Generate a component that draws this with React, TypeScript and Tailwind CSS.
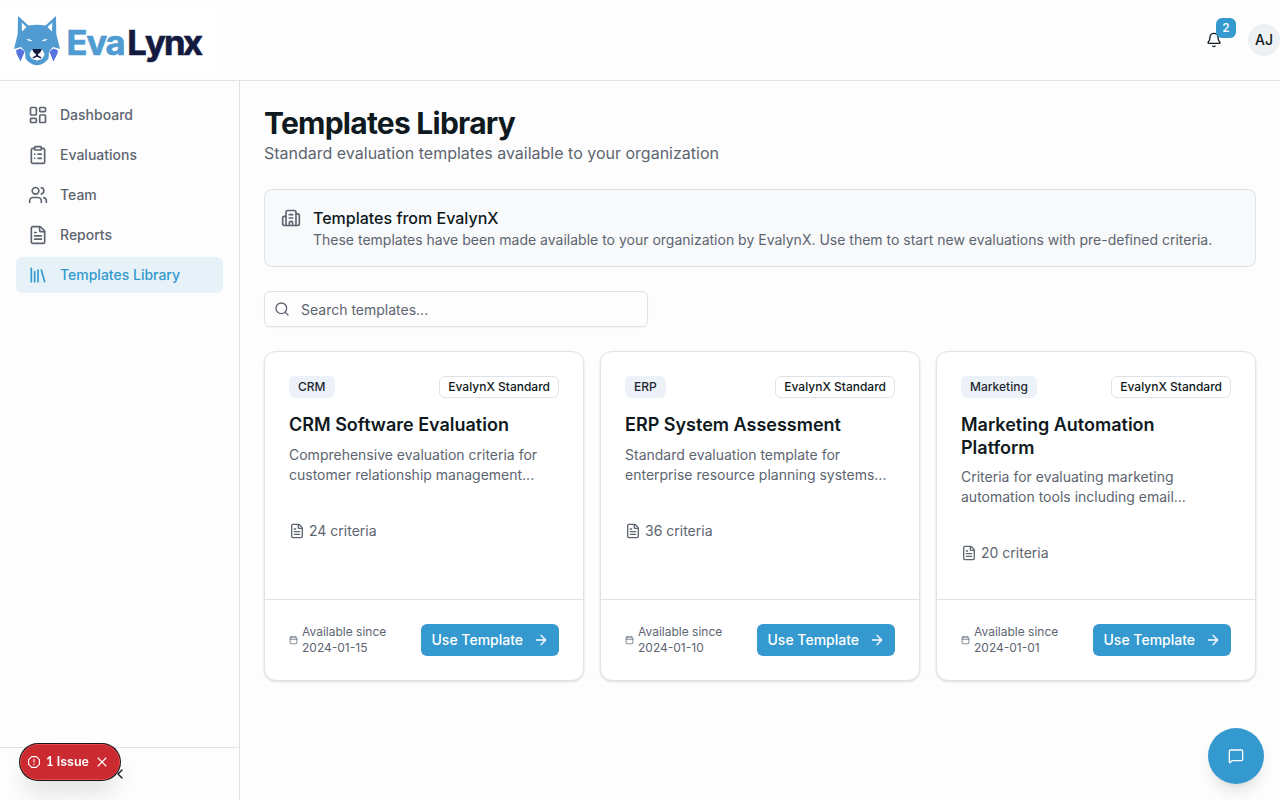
import React from 'react';
import {
  ArrowRight,
  Bell,
  Building2,
  Calendar,
  ChevronLeft,
  ClipboardList,
  FileText,
  LayoutDashboard,
  Library,
  MessageSquare,
  Search,
  Users,
  X,
} from 'lucide-react';

const NAV_ITEMS = [
  { label: 'Dashboard', icon: LayoutDashboard },
  { label: 'Evaluations', icon: ClipboardList },
  { label: 'Team', icon: Users },
  { label: 'Reports', icon: FileText },
  { label: 'Templates Library', icon: Library },
];

const TEMPLATES = [
  {
    id: 1,
    category: 'CRM',
    name: 'CRM Software Evaluation',
    description: ['Comprehensive evaluation criteria for', 'customer relationship management...'],
    criteria: 24,
    since: '2024-01-15',
  },
  {
    id: 2,
    category: 'ERP',
    name: 'ERP System Assessment',
    description: ['Standard evaluation template for', 'enterprise resource planning systems...'],
    criteria: 36,
    since: '2024-01-10',
  },
  {
    id: 3,
    category: 'Marketing',
    name: 'Marketing Automation Platform',
    description: ['Criteria for evaluating marketing', 'automation tools including email...'],
    criteria: 20,
    since: '2024-01-01',
  },
];

function Logo() {
  return (
    <svg width="216" height="64" viewBox="0 8 216 64" className="bg-white">
      <path
        d="M18 16 L28.5 25.5 Q37 23.8 45.5 25.5 L56 16 L56.3 34 L60 49 L53 47 L49 51.5 L48.5 58.5 Q44 65 37 65.3 Q30 65 25.5 58.5 L25 51.5 L21 47 L14 49 L17.7 34 Z"
        fill="#4f9bd2"
      />
      <path d="M21.7 22.5 L26.500 27 L22 31.5 Z M52.3 22.5 L47.5 27 L52 31.5 Z" fill="#fff" />
      <path d="M26.5 39 Q30.5 38.8 32.5 41.2 Q28 41.5 26.5 39 Z M47.5 39 Q43.5 38.8 41.5 41.2 Q46 41.5 47.5 39 Z" fill="#fff" />
      <path d="M31.5 50 L29.5 54 Q30 59.5 37 60.5 Q44 59.5 44.5 54 L42.5 50 Z" fill="#fff" />
      <path d="M32.5 49 H41.5 Q41.3 52.5 38 54 V55.3 L41.5 57.5 L40.8 58.5 L37 56.8 L33.2 58.5 L32.5 57.5 L36 55.3 V54 Q32.7 52.5 32.5 49 Z" fill="#141b41" />
      <path d="M20.5 48.5 L24.7 51.5 L20.5 61.5 L16.3 53 V50 Z M53.5 48.5 L49.3 51.5 L53.5 61.5 L57.7 53 V50 Z" fill="#5673e0" />
      <g fontFamily="Inter, sans-serif" fontWeight="700" fontSize="34.5" strokeWidth="0.7">
        <text x="66.5 86.5 105.5" y="55" fill="#4f9bd2" stroke="#4f9bd2">
          Eva
        </text>
        <text x="127.3 145 164 183" y="55" fill="#141b41" stroke="#141b41">
          Lynx
        </text>
      </g>
    </svg>
  );
}

function Header() {
  return (
    <header className="flex h-[81px] shrink-0 items-center justify-between border-b border-[#dfe3e7]">
      <Logo />
      <div className="flex items-center gap-4">
        <button className="relative flex h-9 w-9 items-center justify-center">
          <Bell size={16} />
          <span className="absolute -top-1 right-[-4px] flex h-5 w-5 items-center justify-center rounded-md bg-[#3399ce] text-xs font-medium text-white">
            2
          </span>
        </button>
        <div className="flex h-8 w-8 items-center justify-center rounded-full bg-[#edf1f4] text-sm font-medium">AJ</div>
      </div>
    </header>
  );
}

function Sidebar() {
  return (
    <aside className="flex w-60 shrink-0 flex-col border-r border-[#dfe1e4]">
      <nav className="flex flex-1 flex-col gap-1 p-4">
        {NAV_ITEMS.map(({ label, icon: Icon }) => (
          <a
            key={label}
            className={
              label === 'Templates Library'
                ? 'flex h-9 items-center gap-3 rounded-md bg-[#e6f2f7] px-3 text-sm font-medium text-[#3399ce]'
                : 'flex h-9 items-center gap-3 rounded-md px-3 text-sm font-medium text-[#5d6570]'
            }
          >
            <Icon size={20} />
            {label}
          </a>
        ))}
      </nav>
      <div className="flex h-[53px] items-center justify-center border-t border-[#dfe1e4]">
        <ChevronLeft size={16} />
      </div>
    </aside>
  );
}

function TemplateCard({ template }: { template: (typeof TEMPLATES)[number] }) {
  return (
    <div className="flex h-[330px] flex-col rounded-xl border border-[#dfe3e7] bg-white shadow-sm">
      <div className="flex-1 px-6 pt-6">
        <div className="flex items-center justify-between text-xs font-medium">
          <span className="flex h-[22px] items-center rounded-md bg-[#edf2f9] px-[9px] text-[#1e2731]">{template.category}</span>
          <span className="flex h-[22px] items-center rounded-md border border-[#dfe3e7] px-2">EvalynX Standard</span>
        </div>
        <h3 className="mt-4 text-lg leading-[22.5px] font-semibold">{template.name}</h3>
        <p className="mt-2 text-sm whitespace-nowrap text-[#5d6570]">
          {template.description[0]}
          <br />
          {template.description[1]}
        </p>
        <div className="mt-9 flex items-center gap-1 text-sm text-[#5d6570]">
          <FileText size={16} />
          {template.criteria} criteria
        </div>
      </div>
      <div className="flex h-[81px] items-center justify-between border-t border-[#dfe3e7] px-6">
        <div className="flex items-center gap-1 text-xs text-[#5d6570]">
          <Calendar className="h-3 w-[9px]" />
          <span className="w-[90px]">Available since {template.since}</span>
        </div>
        <button className="flex h-8 w-[138px] items-center justify-between rounded-md bg-[#3399ce] pr-2.5 pl-[10.5px] text-sm font-medium text-white">
          Use Template
          <ArrowRight size={16} />
        </button>
      </div>
    </div>
  );
}

function IssueToast() {
  return (
    <div className="fixed bottom-5 left-5 flex h-9 w-[100px] items-center rounded-full border border-[#e5484d] bg-[#ca2a30] pl-[7px] text-[12.5px] font-semibold text-white shadow-[0_0_0_1px_#171717,0_16px_24px_-4px_rgba(0,0,0,0.12)]">
      <svg width="12" height="12" viewBox="0 0 12 12" fill="none" stroke="#fff" strokeWidth="1.1">
        <path d="M3.7 .6 h4.6 l3.1 3.1 v4.6 l-3.1 3.1 h-4.6 l-3.1 -3.1 v-4.6 Z" strokeLinejoin="round" />
        <path d="M6 3 v3.5 M6 7.8 v1.2" />
      </svg>
      <span className="ml-1.5 w-[43px] whitespace-nowrap">
        <span className="font-[Lato] text-[13px] font-bold">1</span> Issue
      </span>
      <X size={16} strokeWidth={1.7} className="ml-[5px]" />
    </div>
  );
}

export default function App() {
  return (
    <div className="flex h-screen flex-col overflow-hidden bg-[#fdfdfd] font-[Inter,sans-serif] text-[#0f1920]">
      <Header />
      <div className="flex min-h-0 flex-1">
        <Sidebar />
        <main className="flex flex-1 flex-col gap-6 p-6">
          <div>
            <h1 className="text-3xl font-bold tracking-tight">Templates Library</h1>
            <p className="text-[#5d6570]">Standard evaluation templates available to your organization</p>
          </div>

          <div className="flex gap-3 rounded-lg border border-[#dfe3e7] bg-[#f8f9fb] p-4">
            <Building2 size={20} className="mt-0.5 text-[#5d6570]" />
            <div>
              <h2 className="font-medium">Templates from EvalynX</h2>
              <p className="text-sm text-[#5d6570]">
                These templates have been made available to your organization by EvalynX. Use them to start new evaluations with
                pre-defined criteria.
              </p>
            </div>
          </div>

          <div className="flex h-9 w-96 items-center gap-[11px] rounded-md border border-[#dfe3e7] px-[9px] text-sm text-[#5d6570] shadow-xs">
            <Search size={16} />
            <span className="pt-0.5">Search templates...</span>
          </div>

          <div className="grid grid-cols-3 gap-4">
            {TEMPLATES.map((template) => (
              <TemplateCard key={template.id} template={template} />
            ))}
          </div>
        </main>
      </div>

      <button className="fixed right-4 bottom-4 flex h-14 w-14 items-center justify-center rounded-full bg-[#3399ce] text-white shadow-lg">
        <MessageSquare size={16} />
      </button>
      <IssueToast />
    </div>
  );
}
